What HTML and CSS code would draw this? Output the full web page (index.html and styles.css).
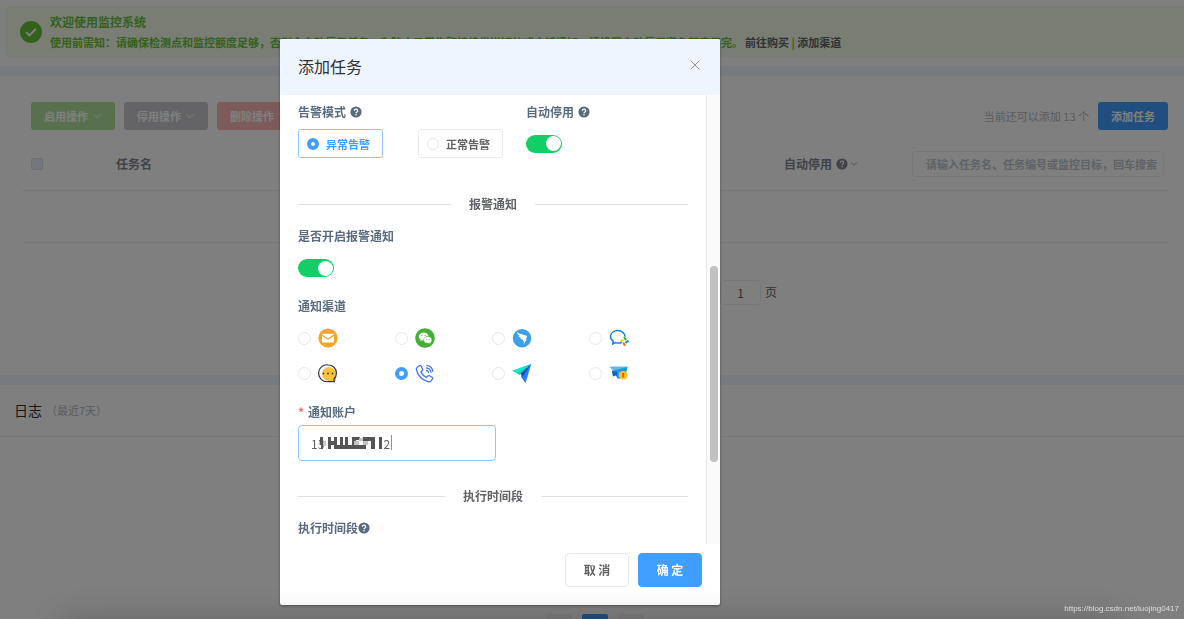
FILE: index.html
```html
<!DOCTYPE html>
<html lang="zh-CN">
<head>
<meta charset="utf-8">
<meta name="viewport" content="width=device-width, initial-scale=1">
<title>监控系统</title>
<link rel="stylesheet" href="styles.css">
</head>
<body>
<svg width="0" height="0" class="sprite" aria-hidden="true">
  <symbol id="help" viewBox="0 0 12 12">
    <circle cx="6" cy="6" r="5.6" fill="currentColor"/>
    <path d="M4.3 4.8a1.7 1.6 0 1 1 2.6 1.3c-.6.4-.9.6-.9 1.2" fill="none" stroke="#fff" stroke-width="1.2"/>
    <circle cx="6" cy="8.8" r=".8" fill="#fff"/>
  </symbol>
  <symbol id="chevron" viewBox="0 0 10 10">
    <path d="M1.5 3.2 5 6.7l3.5-3.5" fill="none" stroke="currentColor" stroke-width="1"/>
  </symbol>
</svg>

<main class="page">
  <section class="banner-wrap">
    <div class="banner">
      <svg class="banner-icon" viewBox="0 0 22 22" aria-hidden="true"><circle cx="11" cy="11" r="11" fill="#67c23a"/><path d="m6.2 11.2 3.2 3.2 6.4-6.4" fill="none" stroke="#fff" stroke-width="1.8"/></svg>
      <div class="banner-text">
        <h1 class="banner-title">欢迎使用监控系统</h1>
        <p class="banner-desc">使用前需知：请确保检测点和监控额度足够，否则会自动停用任务；为防止异常告警持续发送短信或电话通知，请设置自动停用避免额度用完。<a class="banner-link" href="#buy">前往购买</a> | <a class="banner-link" href="#channel">添加渠道</a></p>
      </div>
    </div>
  </section>

  <section class="tasks">
    <div class="toolbar">
      <button class="btn btn-green" type="button">启用操作<svg class="chev"><use href="#chevron"/></svg></button>
      <button class="btn btn-gray" type="button">停用操作<svg class="chev"><use href="#chevron"/></svg></button>
      <button class="btn btn-red" type="button">删除操作<svg class="chev"><use href="#chevron"/></svg></button>
      <span class="quota">当前还可以添加 13 个</span>
      <button class="btn btn-blue" type="button">添加任务</button>
    </div>
    <table class="task-table">
      <colgroup><col class="col-check"><col><col class="col-auto"><col class="col-search"></colgroup>
      <thead>
        <tr>
          <th class="cell-check"><input class="check" type="checkbox" aria-label="全选"></th>
          <th>任务名</th>
          <th><span class="th-auto">自动停用<svg class="help"><use href="#help"/></svg><svg class="chev-small"><use href="#chevron"/></svg></span></th>
          <th><input class="search" type="text" aria-label="搜索任务" placeholder="请输入任务名、任务编号或监控目标，回车搜索"></th>
        </tr>
      </thead>
      <tbody><tr><td colspan="4"></td></tr></tbody>
    </table>
    <div class="pager">
      <label class="jump" for="page-no"><input class="jump-input" id="page-no" type="text" value="1">页</label>
    </div>
  </section>

  <section class="logs">
    <header class="logs-head"><h2 class="logs-title">日志</h2><span class="logs-note">（最近7天）</span></header>
    <div class="logs-body"></div>
    <div class="log-pager">
      <button class="page-btn" type="button" aria-label="上一页"></button>
      <button class="page-btn page-current" type="button" aria-label="第一页"></button>
      <button class="page-btn" type="button" aria-label="下一页"></button>
    </div>
  </section>
</main>

<div class="mask">
  <div class="dialog" role="dialog" aria-labelledby="dialog-title">
    <header class="dialog-head">
      <h2 class="dialog-title" id="dialog-title">添加任务</h2>
      <button class="close" type="button" aria-label="关闭"><svg viewBox="0 0 10 10" class="close-icon"><path d="m.7.7 8.6 8.6M9.3.7.7 9.3" stroke="#909399" stroke-width="1" fill="none"/></svg></button>
    </header>

    <div class="dialog-body">
      <form class="form" id="task-form">
        <div class="mode-row">
          <div class="field mode-field">
            <span class="label">告警模式<svg class="help"><use href="#help"/></svg></span>
            <div class="mode-options">
              <label class="radio-box radio-box-on"><input class="radio" type="radio" name="mode" checked>异常告警</label>
              <label class="radio-box"><input class="radio" type="radio" name="mode">正常告警</label>
            </div>
          </div>
          <div class="field">
            <label class="label" for="auto-stop">自动停用<svg class="help"><use href="#help"/></svg></label>
            <div class="switch-line"><input class="switch" id="auto-stop" type="checkbox" role="switch" checked></div>
          </div>
        </div>

        <div class="divider notice-divider">报警通知</div>

        <div class="notice-field">
          <label class="label" for="notice">是否开启报警通知</label>
          <input class="switch" id="notice" type="checkbox" role="switch" checked>
        </div>

        <div class="channel-field">
          <span class="label">通知渠道</span>
          <div class="channels">
            <label class="channel"><input class="radio" type="radio" name="channel" aria-label="邮件">
              <svg class="channel-icon" viewBox="0 0 20 20"><circle cx="10" cy="10" r="9.600" fill="#f5a623"/><rect x="4" y="5.800" width="12" height="8.800" rx="1" fill="#fff"/><path d="m4 7 6 4.300L16 7" fill="none" stroke="#f5a623" stroke-width="1.300"/></svg></label>
            <label class="channel"><input class="radio" type="radio" name="channel" aria-label="微信">
              <svg class="channel-icon" viewBox="0 0 20 20"><circle cx="10" cy="10" r="9.800" fill="#41b035"/><path d="M8.600 4.500C5.900 4.500 3.800 6.300 3.800 8.500c0 1.300.7 2.400 1.800 3.100l-.4 1.600 1.800-.9 1.600.2c.1-2.700 2.100-4.300 5-4.300C13.100 6 11.200 4.500 8.600 4.500z" fill="#fff"/><path d="M12.700 8.500c2.400 0 4.300 1.600 4.300 3.500 0 1.100-.6 2-1.500 2.600l.3 1.400-1.600-.8c-3.200.7-5.600-.9-5.600-3.200 0-2 1.800-3.500 4.100-3.500z" fill="#fff" stroke="#41b035" stroke-width=".5"/><g fill="#41b035"><circle cx="7" cy="7.400" r=".6"/><circle cx="10.200" cy="7.400" r=".6"/><circle cx="11.400" cy="11.200" r=".5"/><circle cx="14.200" cy="11.200" r=".5"/></g></svg></label>
            <label class="channel"><input class="radio" type="radio" name="channel" aria-label="钉钉">
              <svg class="channel-icon" viewBox="0 0 20 20"><circle cx="10" cy="10.300" r="9.200" fill="#3c9fe8"/><path d="M5 4.300c3 1.800 6.200 2.300 9.500 3.500.7.300.6 1 .3 1.600l-1.400 2.400h1.400l-3.200 4.500.6-3h-1.300l.5-1.600c-1.300.2-2.500-.1-3.200-1.600l1.700-.1C7.900 9.800 6.600 9 6.300 7.700l1.700.3C6.300 7.200 5.300 6 5 4.300z" fill="#fff"/></svg></label>
            <label class="channel"><input class="radio" type="radio" name="channel" aria-label="企业微信">
              <svg class="channel-icon" viewBox="0 0 20 20"><path d="M13 14.300c-2 1-4.300 1-6.300.3L3.800 16l.4-2.700C2 11.700 1.200 9.800 1.500 7.900c.6-3.300 3.800-5.300 7-5.300 4.500 0 7.600 2.900 7.600 6.100" fill="none" stroke="#1285e5" stroke-width="1.500"/><g stroke-width="2" stroke-linecap="round"><path d="m15.500 9.700 1.100 1.700" stroke="#2fb344"/><path d="m18.900 13.200-1.800 1.100" stroke="#1285e5"/><path d="m15.600 17-1-1.700" stroke="#fb6500"/><path d="m12.100 13.200 1.800-1.100" stroke="#ffcc00"/></g></svg></label>
            <label class="channel"><input class="radio" type="radio" name="channel" aria-label="短信">
              <svg class="channel-icon" viewBox="0 0 20 20"><path d="M11 4a7.200 7.200 0 0 1 7 7.200V18h-7A7 7 0 0 1 11 4z" fill="#fdc13c"/><path d="M10 1.800a8.500 8.500 0 0 1 8.500 8.500c0 2.600-1 4.300-2.700 5.900l.6 2.500H10a8.500 8.500 0 1 1 0-16.900z" fill="none" stroke="#34383f" stroke-width="1.200"/><g fill="#34383f"><circle cx="5.500" cy="10.500" r=".9"/><circle cx="10" cy="10.500" r=".9"/><circle cx="14.500" cy="10.500" r=".9"/></g></svg></label>
            <label class="channel"><input class="radio" type="radio" name="channel" aria-label="电话" checked>
              <svg class="channel-icon" viewBox="0 0 20 20" fill="none" stroke="#4773ee" stroke-width="1.300"><path d="M2.500 4 4.700 2.700c.7-.3 1.300-.1 1.600.6l1.300 3c.2.600 0 1-.4 1.400L5.900 8.900c1.100 2.300 2.900 4.200 5.600 5.500l1.500-1.500c.4-.4.9-.5 1.400-.2l2.700 1.500c.7.400.8 1 .4 1.600L16 17.800c-.8 1-2 1.200-3.200.8C7.300 16.800 3.300 13 1.600 7.200 1.200 6 1.400 4.800 2.500 4z"/><path d="M11 7.300c1.600.1 2.500 1.100 2.700 2.700M11 4.800c2.900.2 4.700 2 5 5M11.300 2.300c3.800.3 6.200 2.700 6.600 6.500"/></svg></label>
            <label class="channel"><input class="radio" type="radio" name="channel" aria-label="飞书">
              <svg class="channel-icon" viewBox="0 0 20 20"><path d="M.3 7.700 19.200 1 7.500 11.900z" fill="#13d6ad"/><path d="M.3 7.700 19.200 1 5 9.900z" fill="#17e7cc"/><path d="M19.200 1 9 11.500l1.500 4z" fill="#2563dc"/><path d="M19.200 1 9 14l4.600 6z" fill="#2b7cf6"/><path d="M19.200 1 8.400 10.600l2.200 3.200z" fill="#1352be"/></svg></label>
            <label class="channel"><input class="radio" type="radio" name="channel" aria-label="推送">
              <svg class="channel-icon" viewBox="0 0 20 20"><path d="M.5 3.500h18.300l-1.500 5H4.500z" fill="#66b5ef"/><path d="M2.800 8 18.500 4l-3 11z" fill="#1696e8"/><path d="m2.800 8 8.700 1.500-3 6-1.500-3-3 1z" fill="#1263b4"/><path d="m8 9 6-3-3 10-2.500-.7z" fill="#2a9ff0"/><circle cx="14.200" cy="12.200" r="4.300" fill="#fdc51e"/><path d="M14.200 9.900v4.600" stroke="#f04b23" stroke-width="1.800"/></svg></label>
          </div>
        </div>

        <div class="account-field">
          <label class="label" for="account"><span class="required">*</span>通知账户</label>
          <div class="account-box">
            <input class="account" id="account" type="text" value="15&nbsp;&nbsp;&nbsp;&nbsp;&nbsp;&nbsp;&nbsp;&nbsp;&nbsp;&nbsp;&nbsp;&nbsp;&nbsp;&nbsp;&nbsp;&nbsp;&nbsp;&nbsp;&nbsp;&nbsp;&nbsp;&nbsp;2">
            <svg class="mosaic" viewBox="0 0 64 12" aria-hidden="true">
              <path d="M1 0h3v12H2V8H1zM9 0h3v4h3V0h3v8h3V0h3v8h2V0h3v8h4V0h8v3h-4v5h10v4H15V8h-3v4H9zM44 0h12v12h-4V4h-8zM60 0h3v12h-3z" fill="#555"/>
              <path d="M0 4h1v4H0zM4 4h3v5H4zM35 4h5v4h-5zM40 1h4v3h-4zM44 4h5v4h-5z" fill="#c4c4c4"/>
            </svg>
            <span class="caret"></span>
          </div>
        </div>

        <div class="divider time-divider">执行时间段</div>
        <div class="label time-label">执行时间段<svg class="help help-tight"><use href="#help"/></svg></div>
      </form>
      <div class="scrollbar" aria-hidden="true"><div class="thumb"></div></div>
    </div>

    <footer class="dialog-foot">
      <button class="foot-btn" type="button">取 消</button>
      <button class="foot-btn foot-primary" type="submit" form="task-form">确 定</button>
    </footer>
  </div>
</div>
<div class="bottom-shade"></div>
<div class="watermark">https://blog.csdn.net/luojing0417</div>
</body>
</html>
```

FILE: styles.css
```css
* { box-sizing: border-box; }
body {
  margin: 0;
  height: 100vh;
  overflow: hidden;
  background: #fff;
  color: #606266;
  font: 12px/16px "Noto Sans CJK SC", sans-serif;
}
button, input { font: inherit; color: inherit; margin: 0; }
button { cursor: pointer; }
h1, h2, p { margin: 0; }
svg { flex: none; }
.sprite { position: absolute; }

.banner-wrap { padding: 6px 0 9px 5px; }
.banner {
  display: flex;
  align-items: center;
  gap: 8px;
  padding: 5px 15px;
  border-radius: 4px 0 0 4px;
  background: #f2fae9;
  color: #67c23a;
  white-space: nowrap;
}
.banner-icon { width: 22px; height: 22px; }
.banner-title { font-size: 12px; line-height: 21px; font-weight: 700; }
.banner-desc { font-size: 11px; line-height: 20px; font-weight: 700; }
.banner-link { color: #606266; text-decoration: none; }
.banner-link:first-child { margin-left: 2px; }

.tasks { border-top: 10px solid #eef5ff; padding: 26px 16px 70px 22px; }
.toolbar { display: flex; align-items: center; gap: 9px; padding-left: 9px; }
.btn {
  display: flex;
  align-items: center;
  gap: 4px;
  height: 28px;
  padding: 0 13px;
  border: 0;
  border-radius: 3px;
  color: #fff;
  font-size: 11px;
  font-weight: 700;
}
.chev { width: 10px; height: 10px; }
.btn-green { background: #b3e19d; }
.btn-gray { background: #c8c9cc; }
.btn-red { background: #fab6b6; }
.btn-blue { background: #409eff; }
.quota { margin-left: auto; color: #b4b8bf; font-size: 11px; }

.task-table { width: 100%; margin-top: 8px; table-layout: fixed; border-collapse: collapse; }
.col-check { width: 94px; }
.col-auto { width: 128px; }
.col-search { width: 256px; }
.task-table th { height: 52px; padding: 0; text-align: left; color: #82858c; font-weight: 700; border-bottom: 1px solid #ebeef5; }
.task-table td { height: 52px; padding: 0; border-bottom: 1px solid #ebeef5; }
.task-table .cell-check { padding-left: 9px; }
.check { display: block; appearance: none; width: 12px; height: 12px; border: 1px solid #dcdfe6; border-radius: 2px; background: #e6eefc; }
.th-auto { display: flex; align-items: center; }
.help { width: 12px; height: 12px; margin-left: 4px; }
.help-tight { margin-left: 0; }
.chev-small { width: 8px; height: 8px; margin-left: 2px; }
.search {
  display: block;
  width: 252px;
  height: 26px;
  padding: 0 4px 0 13px;
  border: 1px solid #ebeef5;
  border-radius: 4px;
  background: #fff;
  font-size: 11px;
}
.search::placeholder { color: #c0c4cc; }

.pager { display: flex; justify-content: flex-end; width: 364px; margin: 37px auto 0; }
.jump { display: flex; align-items: center; gap: 4px; }
.jump-input { width: 41px; height: 25px; padding: 0; text-align: center; border: 1px solid #ebeef5; border-radius: 4px; background: #fff; }

.logs { border-top: 10px solid #eef5ff; }
.logs-head { display: flex; align-items: center; gap: 4px; height: 52px; padding: 0 14px; border-bottom: 1px solid #ebeef5; }
.logs-title { color: #303133; font-size: 14px; line-height: 20px; font-weight: 400; }
.logs-note { color: #b4b8bf; font-size: 11px; }
.logs-body { height: 177px; }
.log-pager { display: flex; justify-content: center; gap: 10px; padding-left: 6px; }
.page-btn { width: 26px; height: 26px; padding: 0; border: 0; border-radius: 2px; background: #f4f4f5; }
.page-current { background: #409eff; }

.mask {
  position: fixed;
  inset: 0;
  display: flex;
  align-items: flex-start;
  justify-content: center;
  padding: 39px 184px 0 0;
  background: rgba(0, 0, 0, .5);
}
.dialog { width: 440px; border-radius: 2px; background: #fff; box-shadow: 0 1px 3px rgba(0, 0, 0, .4); }
.dialog-head { display: flex; align-items: center; justify-content: space-between; padding: 15px 20px 17px 18px; border-radius: 2px; background: #eef5ff; }
.dialog-title { color: #303133; font-size: 16px; line-height: 24px; font-weight: 400; }
.close { display: flex; padding: 0 0 2px; border: 0; background: none; }
.close-icon { width: 10px; height: 10px; }
.dialog-body { display: flex; }
.form { flex: 1; padding: 9px 18px 8px; }
.label { display: flex; align-items: center; color: #5a6b80; font-weight: 700; }
.required { margin-right: 4px; color: #f56c6c; }

.mode-row { display: flex; }
.mode-field { width: 228px; }
.field { display: flex; flex-direction: column; gap: 9px; }
.mode-options { display: flex; gap: 35px; }
.radio-box {
  display: flex;
  align-items: center;
  gap: 7px;
  width: 85px;
  height: 29px;
  padding-left: 8px;
  border: 1px solid #e8eaef;
  border-radius: 3px;
  font-size: 11px;
  font-weight: 700;
}
.radio-box-on { border-color: #8cc5ff; color: #409eff; }
.radio { appearance: none; flex: none; width: 12px; height: 12px; border: 1px solid #e4e7ed; border-radius: 50%; background: #fff; }
.radio:checked { border: 4px solid #409eff; }
.switch-line { display: flex; align-items: center; height: 29px; }
.switch { display: flex; align-items: center; appearance: none; width: 36px; height: 18px; padding: 0 1px; border-radius: 9px; background: #13ce66; }
.switch::before { content: ""; width: 15px; height: 15px; margin-left: auto; border-radius: 50%; background: #fff; }

.divider { display: flex; align-items: center; gap: 18px; font-weight: 700; }
.divider::before, .divider::after { content: ""; flex: 1; height: 1px; background: #dcdfe6; }
.notice-divider { margin-top: 38px; }
.notice-field { display: flex; flex-direction: column; gap: 15px; margin-top: 16px; }
.channel-field { margin-top: 21px; }
.channels { display: grid; grid-template-columns: repeat(4, 97px); gap: 15px 0; margin-top: 14px; }
.channel { display: flex; align-items: center; gap: 7px; height: 20px; }
.channel-icon { width: 20px; height: 20px; }
.channel .radio { width: 13px; height: 13px; }
.account-field { margin-top: 21px; }
.account-box { position: relative; width: 198px; margin-top: 5px; }
.account { display: block; width: 100%; height: 36px; padding: 0 12px; border: 1px solid #8cc5ff; border-radius: 4px; background: #fff; outline: 0; }
.mosaic { position: absolute; left: 21px; top: 12px; width: 64px; height: 12px; }
.caret { position: absolute; left: 93px; top: 10px; width: 1px; height: 15px; background: #909399; }
.time-divider { margin-top: 27px; }
.time-label { margin-top: 16px; }

.scrollbar { display: flex; flex-direction: column; width: 14px; padding: 0 2px; border-left: 1px solid #e8e8e8; background: #fafafa; }
.scrollbar::before { content: ""; flex: 171; }
.scrollbar::after { content: ""; flex: 82; }
.thumb { flex: 196; width: 8px; margin-left: 1px; border-radius: 4px; background: #c1c1c1; }

.dialog-foot { display: flex; justify-content: flex-end; gap: 9px; padding: 9px 18px 18px; }
.foot-btn { width: 64px; height: 34px; padding: 0; border: 1px solid #e4e7ed; border-radius: 4px; background: #fff; font-weight: 700; }
.foot-primary { border-color: #409eff; background: #409eff; color: #fff; }

.bottom-shade { position: fixed; left: 60px; right: 60px; bottom: -30px; height: 30px; box-shadow: 0 0 32px rgba(0, 0, 0, .2); }
.watermark { position: fixed; right: 5px; bottom: 4px; color: #dedede; font: 8px/12px "Liberation Sans", sans-serif; }
```
